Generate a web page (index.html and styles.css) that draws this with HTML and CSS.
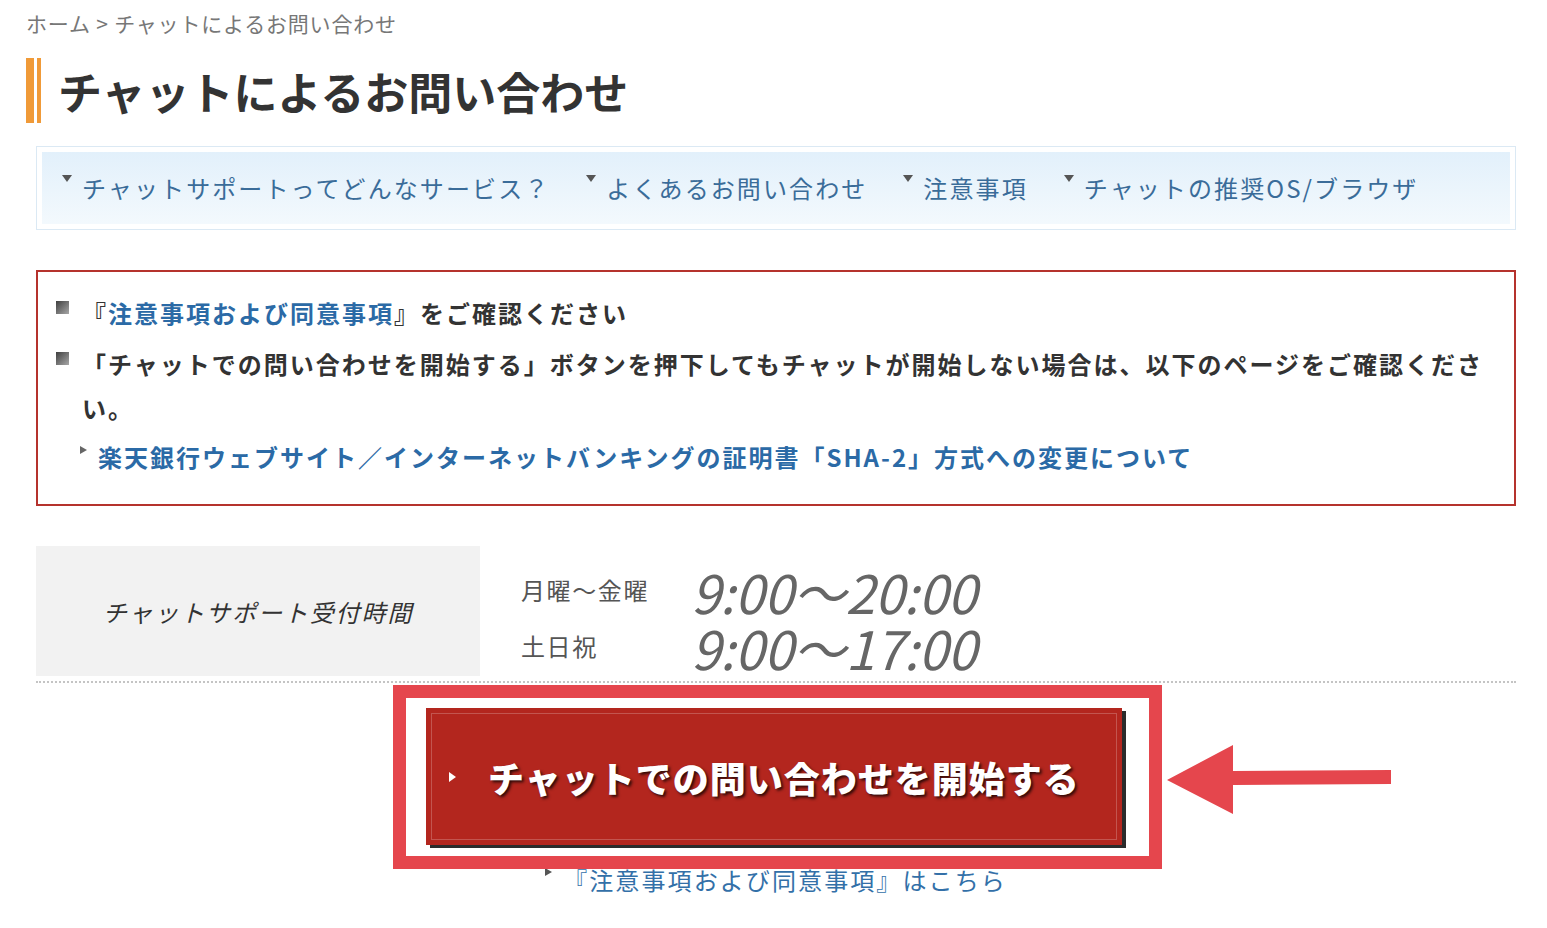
FILE: index.html
```html
<!DOCTYPE html>
<html lang="ja">
<head>
<meta charset="utf-8">
<title>チャットによるお問い合わせ</title>
<link rel="stylesheet" href="styles.css">
</head>
<body>
<div class="page">
  <div class="crumb">ホーム &gt; チャットによるお問い合わせ</div>
  <h1 class="title"><span class="bars"></span>チャットによるお問い合わせ</h1>

  <div class="nav">
    <ul class="nav-list">
      <li class="nav-item"><span class="tri-down"></span><a class="nav-link">チャットサポートってどんなサービス？</a></li>
      <li class="nav-item"><span class="tri-down"></span><a class="nav-link">よくあるお問い合わせ</a></li>
      <li class="nav-item"><span class="tri-down"></span><a class="nav-link">注意事項</a></li>
      <li class="nav-item"><span class="tri-down"></span><a class="nav-link">チャットの推奨OS/ブラウザ</a></li>
    </ul>
  </div>

  <div class="notice">
    <ul class="notice-list">
      <li class="notice-item"><span class="sq"></span><span>『<a class="link">注意事項および同意事項</a>』をご確認ください</span></li>
      <li class="notice-item"><span class="sq"></span><span>「チャットでの問い合わせを開始する」ボタンを押下してもチャットが開始しない場合は、以下のページをご確認ください。</span></li>
    </ul>
    <div class="sub"><span class="tri-right"></span><a class="link">楽天銀行ウェブサイト／インターネットバンキングの証明書「SHA-2」方式への変更について</a></div>
  </div>

  <div class="hours">
    <div class="hours-label">チャットサポート受付時間</div>
    <div class="hours-table">
      <div class="hours-row"><span class="day">月曜〜金曜</span><span class="time">9:00〜20:00</span></div>
      <div class="hours-row"><span class="day">土日祝</span><span class="time">9:00〜17:00</span></div>
    </div>
  </div>

  <div class="cta">
    <div class="btn-wrap">
      <a class="btn"><span class="btn-tri"></span><span class="btn-text">チャットでの問い合わせを開始する</span></a>
      <div class="annot"></div>
    </div>
    <div class="agree"><span class="tri-right-sm"></span><a class="agree-link">『注意事項および同意事項』はこちら</a></div>
  </div>

  <svg class="arrow" width="225" height="70" viewBox="0 0 225 70" aria-hidden="true">
    <polygon points="0,35 66,0 66,26 224,25 224,39 66,40 66,69" fill="#e5464d"/>
  </svg>
</div>
</body>
</html>
```

FILE: styles.css
```css
* { box-sizing: border-box; }
html, body { margin: 0; padding: 0; background: #fff; }
body {
  font-family: "Noto Sans CJK JP", "Noto Sans", sans-serif;
  color: #333;
}
a { text-decoration: none; }

.page {
  position: relative;
  width: 1547px;
  height: 928px;
  padding: 0 31px 0 26px;
  overflow: hidden;
}

.crumb {
  padding-top: 8px;
  line-height: 30px;
  font-size: 21px;
  letter-spacing: 0.8px;
  color: #777;
}

.title {
  margin: 20px 0 0;
  display: flex;
  align-items: center;
  height: 65px;
  font-size: 44px;
  font-weight: 700;
  line-height: 1;
  color: #333;
}
.bars {
  width: 15px;
  height: 65px;
  margin-right: 17px;
  background: linear-gradient(to right, #f09a38 0 8px, #fff 8px 11px, #f09a38 11px 15px);
}

.nav {
  margin: 23px 0 0 10px;
  border: 1px solid #dbe9f4;
  padding: 5px;
  height: 84px;
}
.nav-list {
  list-style: none;
  margin: 0;
  height: 72px;
  padding: 0 0 0 20px;
  display: flex;
  align-items: center;
  gap: 36px;
  background: linear-gradient(#e2f0fb, #f3f9fd);
}
.nav-item {
  display: flex;
  align-items: flex-start;
  font-size: 24px;
  letter-spacing: 2.1px;
  line-height: 34px;
}
.nav-link { color: #3a6c99; }
.tri-down {
  width: 0;
  height: 0;
  border-left: 5px solid transparent;
  border-right: 5px solid transparent;
  border-top: 7px solid #555;
  margin: 4px 10px 0 0;
}

.notice {
  margin: 40px 0 0 10px;
  border: 2px solid #b5322d;
  height: 236px;
  padding: 19px 8px 0 18px;
  font-size: 24px;
  font-weight: 700;
  letter-spacing: 2px;
  line-height: 44px;
}
.notice-list { list-style: none; margin: 0; padding: 0; }
.notice-item {
  display: grid;
  grid-template-columns: 13px 1fr;
  column-gap: 13px;
}
.notice-item + .notice-item { margin-top: 7px; }
.sq {
  width: 13px;
  height: 13px;
  margin-top: 10px;
  background: linear-gradient(135deg, #3f3f3f, #a8a8a8);
}
.link { color: #2b6aa6; }
.sub {
  display: flex;
  align-items: flex-start;
  margin-top: 5px;
  padding-left: 24px;
}
.tri-right {
  width: 0;
  height: 0;
  border-top: 4px solid transparent;
  border-bottom: 4px solid transparent;
  border-left: 7px solid #666;
  margin: 11px 11px 0 0;
}

.hours {
  margin: 40px 0 0 10px;
  display: flex;
  height: 130px;
}
.hours-label {
  width: 444px;
  background: #f2f2f2;
  display: flex;
  align-items: center;
  justify-content: center;
  font-style: italic;
  font-size: 24px;
  letter-spacing: 1.9px;
  color: #333;
}
.hours-table { padding: 17px 0 0 41px; }
.hours-row { display: flex; align-items: center; height: 56px; }
.day {
  width: 170px;
  font-size: 24px;
  letter-spacing: 1.6px;
  color: #555;
  margin-top: -4px;
}
.time {
  font-size: 53px;
  font-weight: 400;
  font-style: italic;
  line-height: 54px;
  letter-spacing: -0.3px;
  color: #666;
}

.cta {
  margin: 5px 0 0 10px;
  border-top: 2px dotted #c4c4c4;
  padding-top: 25px;
  display: flex;
  flex-direction: column;
  align-items: center;
}
.btn-wrap { position: relative; margin-right: 4px; }
.btn {
  display: flex;
  align-items: center;
  width: 696px;
  height: 137px;
  padding-left: 23px;
  background: #b3261e;
  box-shadow: inset 0 0 0 5px #b3261e, inset 0 0 0 6px rgba(255,255,255,0.22), 4px 3px 0 #2b2b2b;
  color: #fff;
}
.btn-tri {
  width: 0;
  height: 0;
  border-top: 5px solid transparent;
  border-bottom: 5px solid transparent;
  border-left: 7px solid #fff;
  margin-right: 32px;
}
.btn-text {
  font-size: 36px;
  font-weight: 900;
  letter-spacing: 1px;
  text-shadow: 2px 2px 3px rgba(0,0,0,0.75);
}
.annot {
  position: absolute;
  left: -33px;
  top: -23px;
  right: -40px;
  bottom: -24px;
  border: 13px solid #e5464d;
  pointer-events: none;
}

.agree {
  display: flex;
  align-items: flex-start;
  margin-top: 19px;
  line-height: 32px;
  font-size: 24px;
  letter-spacing: 2.1px;
}
.tri-right-sm {
  width: 0;
  height: 0;
  border-top: 4px solid transparent;
  border-bottom: 4px solid transparent;
  border-left: 7px solid #555;
  margin: 4px 11px 0 0;
}
.agree-link { color: #3370a8; }

.arrow {
  position: absolute;
  left: 1167px;
  top: 745px;
}
```
